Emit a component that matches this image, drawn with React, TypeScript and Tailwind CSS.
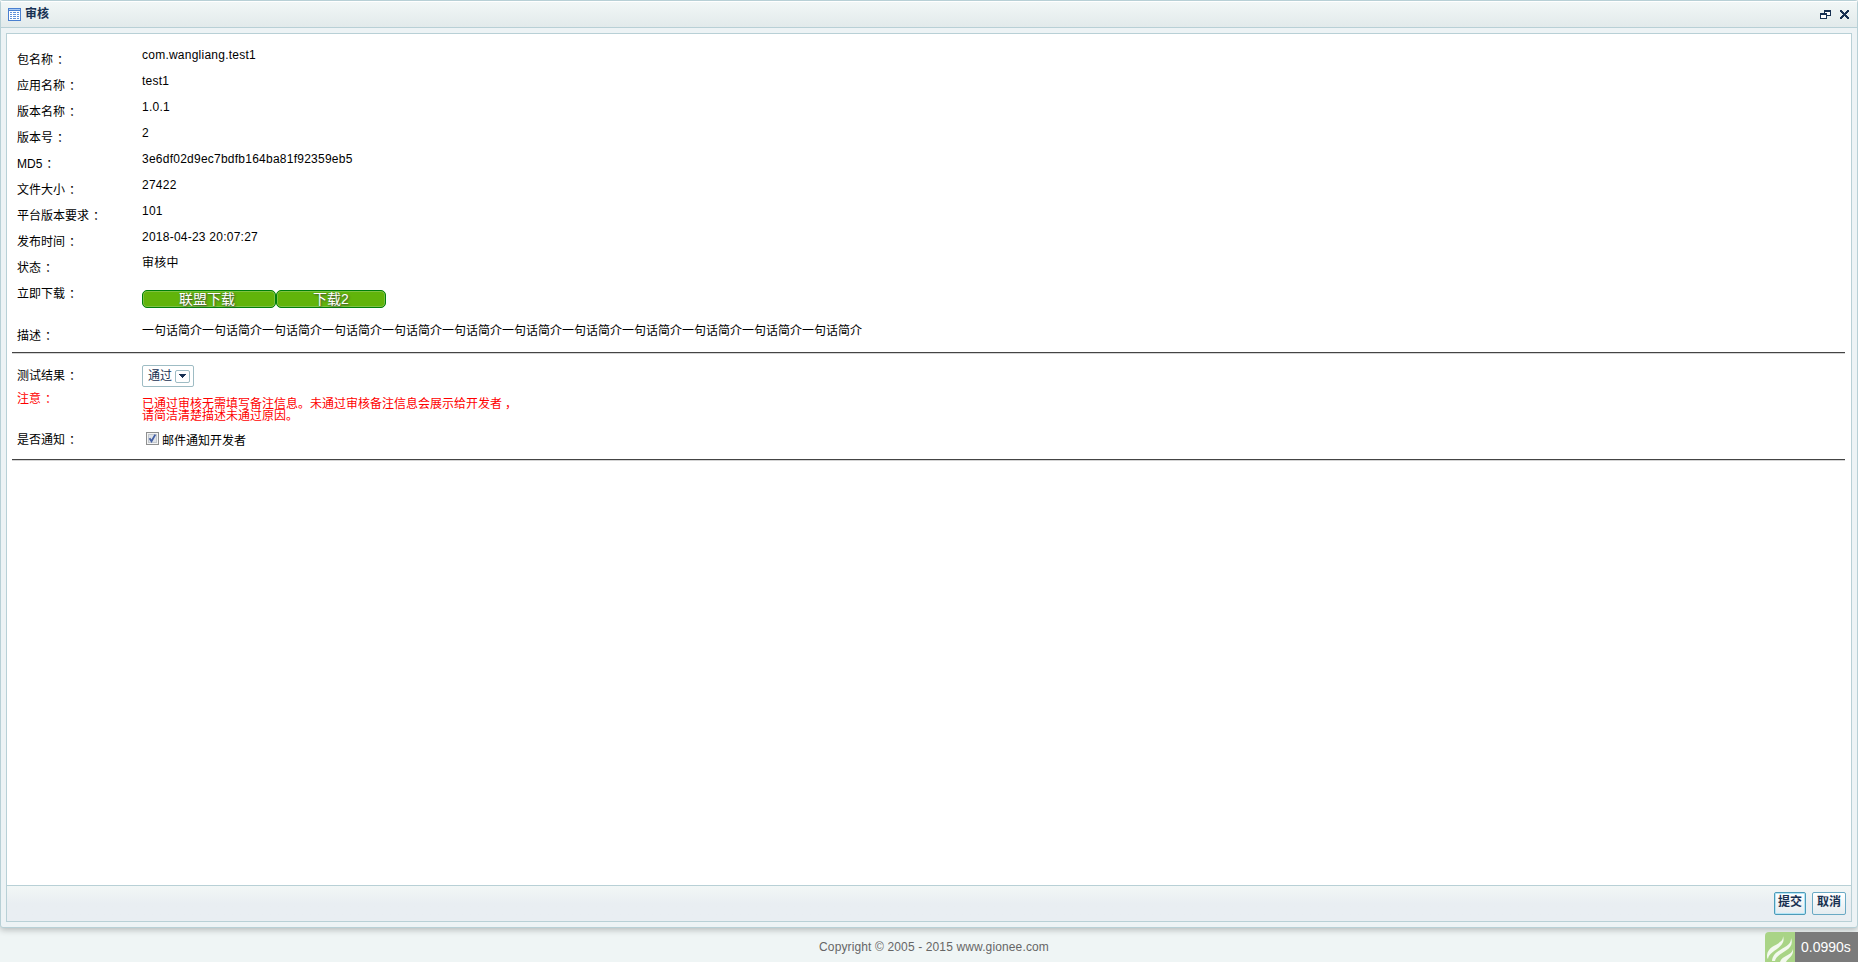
import { ReactNode, useState } from "react";

const details: [string, string][] = [
  ["包名称", "com.wangliang.test1"],
  ["应用名称", "test1"],
  ["版本名称", "1.0.1"],
  ["版本号", "2"],
  ["MD5", "3e6df02d9ec7bdfb164ba81f92359eb5"],
  ["文件大小", "27422"],
  ["平台版本要求", "101"],
  ["发布时间", "2018-04-23 20:07:27"],
  ["状态", "审核中"],
];

function Label({ children, className = "" }: { children: string; className?: string }) {
  return (
    <div className={`w-[125px] shrink-0 ${className}`}>
      {children}
      <span className="pl-[4px]">：</span>
    </div>
  );
}

function Row({ label, children }: { label: string; children: ReactNode }) {
  return (
    <div className="flex h-[26px] pl-[5px] leading-4">
      <Label className="pt-[5px]">{label}</Label>
      <div className="tracking-[0.24px]">{children}</div>
    </div>
  );
}

function Divider() {
  return <div className="h-[2px] shrink-0 border-b border-[#d4d4d4] bg-[#444444]" />;
}

function GreenButton({ children, className }: { children: ReactNode; className: string }) {
  return (
    <button
      className={`h-[18px] rounded-[5px] border border-[#00800a] bg-[#61b40a] text-center text-[14px] leading-4 text-white shadow-[inset_0_0_0_1px_#7fc142] [text-shadow:1px_1px_2px_#444] ${className}`}
    >
      {children}
    </button>
  );
}

function TableIcon() {
  return (
    <svg width="13" height="13" viewBox="0 0 13 13" shapeRendering="crispEdges">
      <path fill="#4a80d0" d="M0 0h13v13H0z" />
      <path fill="#a9cbf5" d="M1 1h11v1H1z" />
      <path fill="#fff" d="M1 3h11v9H1z" />
      <path
        fill="#6391d8"
        d="M2 4h2v1H2zM5 4h3v1H5zM9 4h2v1H9zM2 6h2v1H2zM5 6h3v1H5zM9 6h2v1H9zM2 8h2v1H2zM5 8h3v1H5zM9 8h2v1H9zM2 10h2v1H2zM5 10h3v1H5zM9 10h2v1H9z"
      />
    </svg>
  );
}

export default function App() {
  const [notify, setNotify] = useState(true);
  return (
    <div className="flex h-[962px] w-[1858px] flex-col overflow-hidden bg-[#eff5f5] font-['Liberation_Sans','Noto_Sans_CJK_SC',sans-serif] text-[12px] text-black">
      <div className="flex h-[928px] shrink-0 flex-col rounded-[3px] border border-[#b8d0d6] bg-[#edf3f5] shadow-[0_2px_6px_rgba(0,0,0,0.24)]">
        <header className="flex h-[27px] shrink-0 items-center border-b border-[#b8d0d6] bg-linear-to-b from-[#f2f7f7] to-[#e2eaeb] pr-[8px] pl-[7px] text-[#183152] shadow-[inset_0_1px_0_#fff]">
          <TableIcon />
          <h1 className="ml-[4px] leading-4 font-bold">审核</h1>
          <div className="ml-auto flex items-center gap-[9px]">
            <svg width="11" height="9" viewBox="0 0 11 9" shapeRendering="crispEdges" fill="#183152">
              <path fill="#fff" d="M5 2h5v3H5zM1 5h5v3H1z" />
              <path d="M4 0h7v6H7V5h3V2H5v1H4zM0 3h7v6H0zM1 5v3h5V5z" fillRule="evenodd" />
            </svg>
            <svg width="9" height="9" viewBox="0 0 9 9" shapeRendering="crispEdges" fill="#183152">
              <path d="M0 0h2v1H0zM7 0h2v1H7zM0 1h3v1H0zM6 1h3v1H6zM1 2h3v1H1zM5 2h3v1H5zM2 3h5v1H2zM3 4h3v1H3zM2 5h5v1H2zM1 6h3v1H1zM5 6h3v1H5zM0 7h3v1H0zM6 7h3v1H6zM0 8h2v1H0zM7 8h2v1H7z" />
            </svg>
          </div>
        </header>

        <div className="m-[5px] flex flex-1 flex-col border border-[#b8d0d6] bg-white">
          <main className="flex flex-1 flex-col pt-[13px] pr-[6px] pl-[5px]">
            {details.map(([label, value]) => (
              <Row key={label} label={label}>
                {value}
              </Row>
            ))}
            <div className="flex h-[42px] pl-[5px] leading-4">
              <Label className="pt-[5px]">立即下载</Label>
              <div className="flex pt-[9px]">
                <GreenButton className="w-[134px] pr-[4px]">联盟下载</GreenButton>
                <GreenButton className="w-[110px]">下载2</GreenButton>
              </div>
            </div>
            <div className="flex h-[29px] pl-[5px] leading-4">
              <Label className="pt-[5px]">描述</Label>
              <p className="whitespace-nowrap">{"一句话简介".repeat(12)}</p>
            </div>
            <Divider />

            <div className="flex h-[33px] pt-[11px] pl-[5px]">
              <Label className="pt-[3px] leading-4">测试结果</Label>
              <button className="flex h-[22px] w-[52px] items-center rounded-[2px] border border-[#9ebcc4] bg-white pl-[5px] leading-4 text-[#183152]">
                <span>通过</span>
                <span className="ml-[3px] flex h-[13px] w-[15px] items-center justify-center rounded-[2px] border border-[#9ebcc4]">
                  <svg width="7" height="4" viewBox="0 0 7 4" shapeRendering="crispEdges" fill="#183152">
                    <path d="M0 0h7v1H6v1H5v1H4v1H3V3H2V2H1V1H0z" />
                  </svg>
                </span>
              </button>
            </div>
            <div className="flex h-[42px] pt-[4px] pl-[5px] text-[#ff0000]">
              <Label className="leading-4">注意</Label>
              <p className="pt-[7px] leading-[12px]">
                已通过审核无需填写备注信息。未通过审核备注信息会展示给开发者<span className="pl-[3px]">，</span>
                <br />
                请简洁清楚描述未通过原因。
              </p>
            </div>
            <div className="flex h-[30px] pt-[3px] pl-[5px] leading-4">
              <Label>是否通知</Label>
              <label className="flex h-[18px] items-start pl-[4px]">
                <input type="checkbox" className="sr-only" checked={notify} onChange={() => setNotify(!notify)} />
                <svg width="13" height="13" viewBox="0 0 13 13">
                  <rect x=".5" y=".5" width="12" height="12" fill="#f4f4f4" stroke="#8e8f8f" />
                  <rect x="2.5" y="2.5" width="8" height="8" fill="#dfe3e8" stroke="#c3c8ce" />
                  {notify && <path d="M3.5 6.3l2 3L9.3 2.6" fill="none" stroke="#4560a4" strokeWidth="1.8" />}
                </svg>
                <span className="ml-[3px] pt-px">邮件通知开发者</span>
              </label>
            </div>
            <Divider />
          </main>

          <footer className="flex h-[36px] shrink-0 justify-end gap-[6px] border-t border-[#b8d0d6] bg-linear-to-b from-[#f2f7f6] to-[#e9eef2] to-50% pt-[6px] pr-[5px] font-bold text-[#183152]">
            <button className="h-[23px] w-[32px] rounded-[2px] border border-[#4d9bb8] bg-linear-to-b from-white to-[#e5ecf0] pb-[3px] leading-[18px] shadow-[inset_0_0_0_1px_#b3e5f7]">
              提交
            </button>
            <button className="h-[23px] w-[34px] rounded-[2px] border border-[#6aa9c4] bg-linear-to-b from-white to-[#e5ecf0] pb-[3px] leading-[18px]">
              取消
            </button>
          </footer>
        </div>
      </div>

      <div className="relative flex flex-1 justify-center pt-[11px] pl-[10px] leading-4 tracking-[0.13px] text-[#666666]">
        Copyright © 2005 - 2015 www.gionee.com
        <div className="absolute right-0 bottom-0 flex h-[30px] tracking-normal">
          <svg width="30" height="30" viewBox="0 0 30 30">
            <path d="M4 0h26v30H0V4a4 4 0 0 1 4-4z" fill="#a9d486" />
            <path d="M18 4C19 13 3 12 2 23c0 2 0 3 1 4C4 18 22 16 18 4z" fill="#f3f9ee" />
            <path d="M26 6C27 17 8 16 7 29h3C11 20 31 19 26 6z" fill="#f3f9ee" />
            <path d="M28 17C27 24 17 23 15 30h6c2-4 8-6 7-13z" fill="#f3f9ee" />
          </svg>
          <div className="w-[63px] bg-[#7b7b7b] pl-[6px] text-[14px] leading-[30px] whitespace-nowrap text-white">0.0990s</div>
        </div>
      </div>
    </div>
  );
}
